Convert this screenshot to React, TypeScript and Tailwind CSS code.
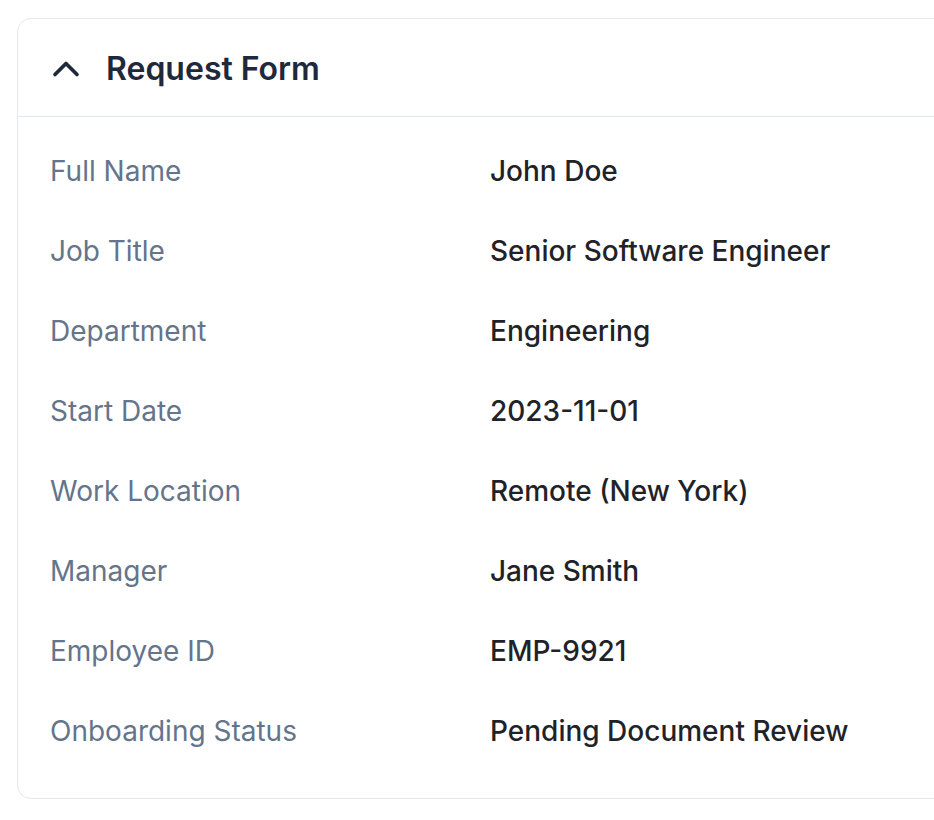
import { ChevronUp } from "lucide-react";

const rows = [
  { label: "Full Name", value: "John Doe" },
  { label: "Job Title", value: "Senior Software Engineer" },
  { label: "Department", value: "Engineering" },
  { label: "Start Date", value: "2023-11-01" },
  { label: "Work Location", value: "Remote (New York)" },
  { label: "Manager", value: "Jane Smith" },
  { label: "Employee ID", value: "EMP-9921" },
  { label: "Onboarding Status", value: "Pending Document Review" },
];

export default function App() {
  return (
    <div
      className="h-[820px] w-[934px] overflow-hidden bg-white pl-[17px] pt-[18px]"
      style={{ fontFamily: "Inter, 'Noto Sans', sans-serif" }}
    >
      <div className="w-[980px] rounded-[14px] border border-[#e2e8f0] bg-white">
        <div className="flex h-[98px] items-center border-b border-[#e2e8f0] pl-[26px] pt-[2px]">
          <ChevronUp size={44} strokeWidth={2} className="text-[#1e293b]" />
          <h2 className="ml-[18px] text-[32px] font-semibold leading-[40px] text-[#1e293b]">
            Request Form
          </h2>
        </div>
        <div className="pb-[27px] pt-[14px]">
          {rows.map((row) => (
            <div key={row.label} className="flex py-5 pl-[32px] text-[28px] leading-[40px]">
              <span className="w-[440px] shrink-0 text-[#64748b]">{row.label}</span>
              <span className="font-medium text-[#1f2328]">{row.value}</span>
            </div>
          ))}
        </div>
      </div>
    </div>
  );
}
